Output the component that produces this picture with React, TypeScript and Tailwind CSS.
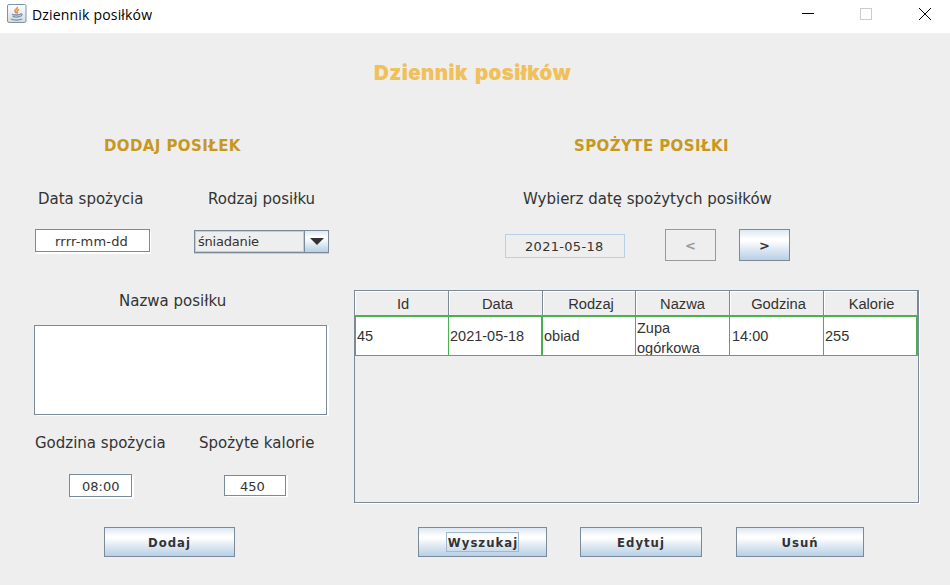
import type { ReactNode } from "react";

const verdana = "font-['DejaVu_Sans',sans-serif] whitespace-nowrap";
const gradient =
  "bg-[linear-gradient(to_bottom,#dde8f3_0%,#ffffff_30%,#ffffff_36%,#dde8f3_65%,#b8cfe5_100%)]";

function Label({ className, children }: { className: string; children: ReactNode }) {
  return <div className={`${verdana} h-5 text-[15px] leading-5 text-[#333333] ${className}`}>{children}</div>;
}

function Heading({ className, children }: { className: string; children: ReactNode }) {
  return (
    <h2
      className={`${verdana} h-5 pt-px text-[15px] font-bold leading-5 tracking-[0.4px] text-[#c8981e] ${className}`}
    >
      {children}
    </h2>
  );
}

function Field({ className, children }: { className: string; children?: ReactNode }) {
  return (
    <div
      className={`${verdana} shrink-0 border border-[#7a8a99] bg-white text-[13px] text-[#333333] ${className}`}
    >
      {children}
    </div>
  );
}

function Button({ className, children }: { className: string; children: ReactNode }) {
  return (
    <button
      className={`${gradient} flex shrink-0 items-center justify-center whitespace-nowrap border border-[#7a8a99] pt-[2px] font-['DejaVu_Sans_Condensed','DejaVu_Sans',sans-serif] text-[13px] font-bold text-[#333333] [font-stretch:condensed] ${className}`}
    >
      {children}
    </button>
  );
}

function JavaIcon() {
  return (
    <svg width="20" height="20" viewBox="0 0 20 20" fill="none">
      <defs>
        <linearGradient id="tile" x1="0" y1="0" x2="0" y2="1">
          <stop offset="0" stopColor="#ffffff" />
          <stop offset="1" stopColor="#d5d9dd" />
        </linearGradient>
      </defs>
      <rect x="0.5" y="0.5" width="18.500" height="18" rx="1.500" fill="url(#tile)" stroke="#7d93a8" />
      <path d="M10.300 3c.6 1.700-2.800 2.500-2.400 4.200.2.900 1.300 1.500 1.300 2.300M12 5.500c-1.700.8-2.500 1.400-1.800 2.400.5.700.2 1.300-.4 1.800" stroke="#ee8a3c" strokeWidth="1.500" />
      <path d="M5 10.300c2 .9 6.500.9 8.300 0M5.600 12.400c2 .8 5.400.8 7.200 0M13.300 10c2.300-.5 2.200 1.700-.3 2.500M4 15c2.500 1.400 8.500 1.400 11 0" stroke="#6f8fac" strokeWidth="1.300" />
    </svg>
  );
}

const columns = [
  { name: "Id", value: "45", width: "w-[94px]", head: "pl-[3px]", pad: "pl-px", edge: "border-r" },
  { name: "Data", value: "2021-05-18", width: "w-[94px]", head: "pl-[4px]", pad: "pl-px", edge: "border-r-2" },
  { name: "Rodzaj", value: "obiad", width: "w-[93px]", head: "pl-[4px]", pad: "pl-px", edge: "border-r" },
  { name: "Nazwa", value: "Zupa ogórkowa", width: "w-[94px]", head: "", pad: "pl-px", edge: "border-r" },
  { name: "Godzina", value: "14:00", width: "w-[94px]", head: "pl-[4px]", pad: "pl-[2px]", edge: "border-r" },
  { name: "Kalorie", value: "255", width: "w-[94px]", head: "pl-[2px]", pad: "pl-px", edge: "border-r-2" },
];

function MealsTable() {
  return (
    <div className="h-[213px] w-[565px] border border-[#7a8a99] font-['Liberation_Sans',Arial,sans-serif] text-[14.700px] text-[#333333] shadow-[1px_1px_0_#ffffff]">
      <div className="flex h-[25px]">
        {columns.map((c) => (
          <div
            key={c.name}
            className={`${c.width} ${c.head} shrink-0 border-b border-r border-[#7a8a99] text-center leading-[27px] shadow-[inset_1px_1px_0_#ffffff]`}
          >
            {c.name}
          </div>
        ))}
      </div>
      <div className="flex h-10">
        {columns.map((c, i) => (
          <div
            key={c.name}
            className={`${c.width} ${c.pad} ${c.edge} ${i === 0 ? "border-l" : ""} shrink-0 overflow-hidden border-y border-[#4caf50] bg-white text-[14.500px] ${
              c.name === "Nazwa" ? "pt-px leading-5" : "leading-[38px]"
            }`}
          >
            {c.value}
          </div>
        ))}
      </div>
    </div>
  );
}

export default function App() {
  return (
    <div className="h-[585px] w-[950px] overflow-hidden bg-[#eeeeee]">
      <header className="flex h-[33px] items-start bg-white">
        <div className="ml-[7px] mt-1">
          <JavaIcon />
        </div>
        <div className="ml-[5px] grow whitespace-nowrap font-['Open_Sans',sans-serif] text-[14px] leading-[30px] tracking-[0.18px] text-black">
          Dziennik posiłków
        </div>
        <svg width="148" height="33" viewBox="0 0 148 33" fill="none" shapeRendering="crispEdges">
          <path d="M0 13.500h12" stroke="#000" />
          <rect x="58.500" y="8.500" width="11" height="11" stroke="#cccccc" />
          <path d="M117 8l12 12M129 8l-12 12" stroke="#000" shapeRendering="auto" />
        </svg>
      </header>

      <h1 className="ml-[374px] mt-[25px] h-[30px] whitespace-nowrap font-['Inter',sans-serif] text-[20.500px] font-black leading-[30px] tracking-[0.42px] text-[#f0c05a] [word-spacing:2.5px]">
        Dziennik posiłków
      </h1>

      <div className="mt-[47px] flex">
        <section className="w-[354px] shrink-0">
          <Heading className="ml-[104px]">DODAJ POSIŁEK</Heading>
          <div className="mt-[34px] flex">
            <Label className="ml-[38px] w-[170px]">Data spożycia</Label>
            <Label className="">Rodzaj posiłku</Label>
          </div>
          <div className="mt-5 flex h-[25px] items-start">
            <Field className="ml-[35px] h-[23px] w-[115px] pl-[19px] leading-[23px] tracking-[0.2px] shadow-[1px_2px_0_#ffffff]">
              rrrr-mm-dd
            </Field>
            <div className="ml-11 mt-px flex h-[23px] w-[135px] border border-[#7a8a99] shadow-[0_1px_0_#b8cfe5]">
              <div
                className={`${verdana} w-[109px] border border-[#b8cfe5] pl-[2px] text-[13px] leading-[19px] tracking-[-0.2px] text-[#333333]`}
              >
                śniadanie
              </div>
              <div className={`${gradient} flex grow items-center justify-center border-l border-[#7a8a99]`}>
                <svg width="14" height="7" viewBox="0 0 14 7">
                  <path d="M0 0h14L7 7z" fill="#333333" />
                </svg>
              </div>
            </div>
          </div>
          <Label className="ml-[119px] mt-[37px]">Nazwa posiłku</Label>
          <Field className="ml-[34px] mt-[14px] h-[90px] w-[293px] shadow-[2px_1px_0_#ffffff]" />
          <div className="mt-[18px] flex">
            <Label className="ml-[35px] w-[164px]">Godzina spożycia</Label>
            <Label className="">Spożyte kalorie</Label>
          </div>
          <div className="mt-[21px] flex h-[25px] items-start">
            <Field className="ml-[69px] h-[23px] w-[63px] pl-3 leading-[23px] shadow-[2px_2px_0_#ffffff]">08:00</Field>
            <Field className="ml-[92px] mt-px h-[21px] w-[62px] pl-[15px] leading-[21px] shadow-[2px_1px_0_#ffffff]">
              450
            </Field>
          </div>
          <Button className="ml-[104px] mt-7 h-[30px] w-[131px] tracking-[1px]">Dodaj</Button>
        </section>

        <section className="w-[596px]">
          <Heading className="ml-[220px]">SPOŻYTE POSIŁKI</Heading>
          <Label className="ml-[169px] mt-[34px]">Wybierz datę spożytych posiłków</Label>
          <div className="mt-5 flex h-8 items-start">
            <div
              className={`${verdana} ml-[151px] mt-[5px] h-6 w-[120px] border border-[#b8cfe5] pl-[19px] text-[13px] leading-6 tracking-[0.3px] text-[#333333]`}
            >
              2021-05-18
            </div>
            <button
              className={`${verdana} ml-10 h-8 w-[51px] border border-[#999999] pt-[2px] text-[13px] font-bold text-[#999999]`}
            >
              &lt;
            </button>
            <Button className="ml-[23px] h-8 w-[51px]">
              <span className="font-['DejaVu_Sans',sans-serif] [font-stretch:normal]">&gt;</span>
            </Button>
          </div>
          <div className="mt-[29px]">
            <MealsTable />
          </div>
          <div className="mt-6 flex">
            <Button className="ml-16 h-[30px] w-[129px] tracking-[1px]">
              <span className="-mt-[2px] flex h-5 w-[73px] items-center justify-center border border-[#a3b8cc] pl-px pt-[2px]">
                Wyszukaj
              </span>
            </Button>
            <Button className="ml-[33px] h-[30px] w-[122px] tracking-[1px]">Edytuj</Button>
            <Button className="ml-[34px] h-[30px] w-[128px] tracking-[1px]">Usuń</Button>
          </div>
        </section>
      </div>
    </div>
  );
}
